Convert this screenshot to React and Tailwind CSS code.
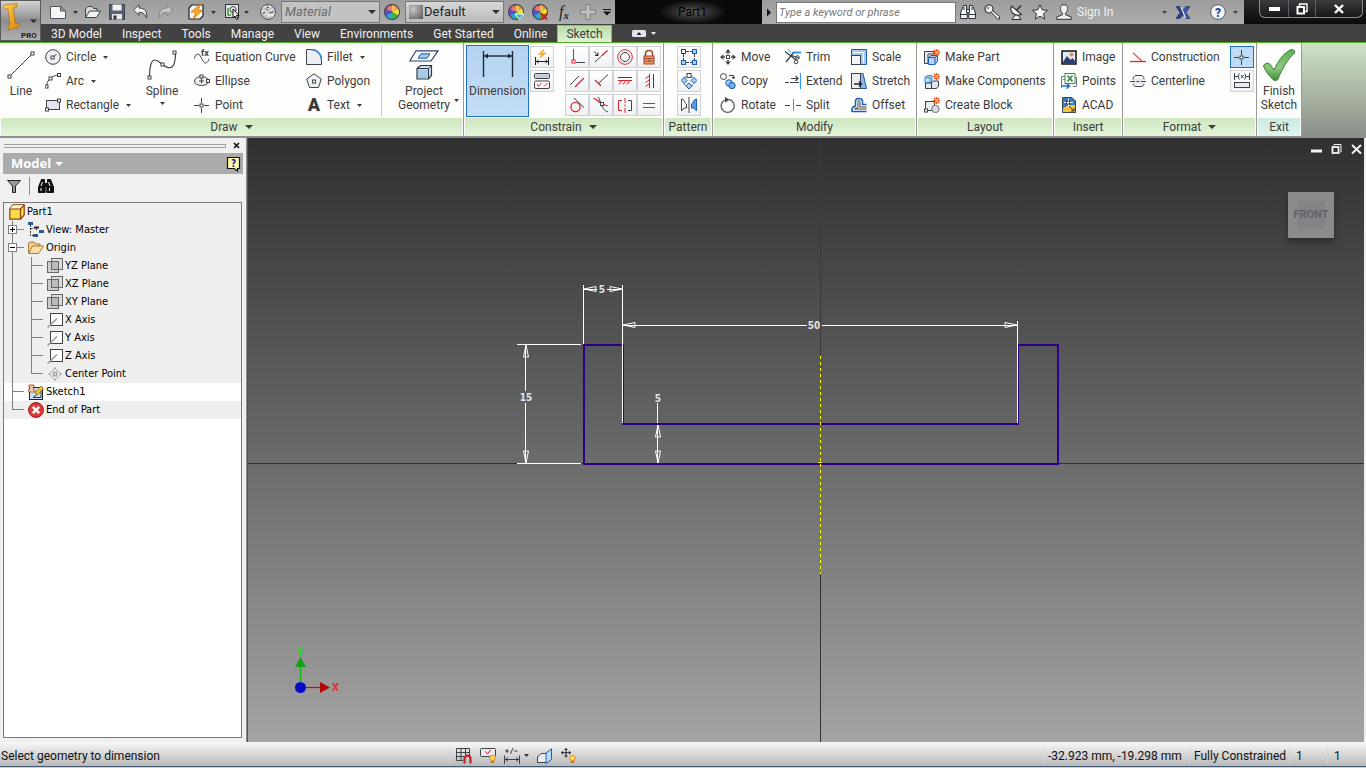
import clsx from "clsx";

const INK = "#3d4349";
const BLUE = "#1c5fb0";
const RED = "#d8262c";

function Svg({ w = 16, h = 16, className, children }) {
  return (
    <svg
      width={w}
      height={h}
      viewBox={`0 0 ${w} ${h}`}
      fill="none"
      stroke={INK}
      className={clsx("shrink-0", className)}
      aria-hidden="true"
    >
      {children}
    </svg>
  );
}

function Dot({ x, y, stroke = INK, fill = "#fff" }) {
  return <rect x={x - 1.5} y={y - 1.5} width="3" height="3" fill={fill} stroke={stroke} />;
}

function Caret({ small, className }) {
  return small ? (
    <svg width="5" height="3" viewBox="0 0 5 3" className={clsx("shrink-0", className)} aria-hidden="true">
      <path d="M0 0H5L2.5 3Z" fill="currentColor" />
    </svg>
  ) : (
    <svg width="8" height="4" viewBox="0 0 8 4" className={clsx("shrink-0", className)} aria-hidden="true">
      <path d="M0 0H8L4 4Z" fill="currentColor" />
    </svg>
  );
}

function ColorWheel() {
  return (
    <g stroke="none">
      <circle cx="8" cy="8" r="8" fill="#3b3f55" />
      <path d="M8 8V1A7 7 0 0 1 14 4.5Z" fill="#f7a11b" />
      <path d="M8 8L14 4.5A7 7 0 0 1 14 11.5Z" fill="#f4e23a" />
      <path d="M8 8L14 11.5A7 7 0 0 1 8 15Z" fill="#3cb64a" />
      <path d="M8 8V15A7 7 0 0 1 2 11.5Z" fill="#2aa6d8" />
      <path d="M8 8L2 11.5A7 7 0 0 1 2 4.5Z" fill="#5b4fc8" />
      <path d="M8 8L2 4.5A7 7 0 0 1 8 1Z" fill="#d8352f" />
      <ellipse cx="7" cy="4.5" rx="4" ry="2.5" fill="#fff" opacity="0.35" />
    </g>
  );
}

function Spark() {
  return (
    <>
      <path d="M12.5 0V7M9 3.5H16M10 1L15 6M15 1L10 6" stroke="#ee4a24" strokeWidth="1.2" />
      <circle cx="12.5" cy="3.5" r="1.3" fill="#ffd34d" stroke="none" />
    </>
  );
}

function Binoculars({ dark }) {
  return (
    <g fill={dark ? "#111" : "#f4f4f4"} stroke={dark ? "#111" : "#2b2f36"}>
      <path d="M3.5 1.5H6.5V5L7.2 8V14.5H0.5V9Z" />
      <path d="M9.5 1.5H12.5L15.5 9V14.5H8.8V8L9.5 5Z" />
      <path d="M6.5 5.5H9.5V8.5H6.5Z" />
      {dark ? (
        <path d="M4.5 4L3 8M3 10V13M10.5 4L12 8M11.5 10V13" stroke="#fff" />
      ) : (
        <path d="M1 10.500H7M9 10.500H15.500M4 3V6M12 3V6" />
      )}
    </g>
  );
}

const icons = {
  circle: (
    <>
      <circle cx="8" cy="8" r="7.3" fill="#eef0f2" />
      <path d="M8 8.5L11.5 5" />
      <Dot x={7.5} y={8.5} />
    </>
  ),
  arc: (
    <>
      <path d="M1.5 13.5C2 9 3 7.5 5.5 5.5C8 3 10.5 2.2 14.5 2" />
      <Dot x={1.5} y={13.5} />
      <Dot x={5.5} y={5.5} />
      <Dot x={14} y={2} />
    </>
  ),
  rectangle: (
    <>
      <rect x="1.5" y="3.5" width="13" height="9" fill="#e3e6ee" />
      <Dot x={2} y={12.5} />
      <Dot x={14} y={3.5} />
    </>
  ),
  equation: (
    <>
      <path d="M0 10C1.5 5 4.5 3 7 8C9 13 11 15 13 13.5C14.5 12 14.5 11 15 9.5" />
      <text x="7" y="7" fontSize="9" fontWeight="700" fill={INK} stroke="none">fx</text>
    </>
  ),
  ellipse: (
    <>
      <ellipse cx="7.5" cy="8" rx="7" ry="4.5" fill="#eef0f2" />
      <path d="M5 8H10M7.5 5.5V10.5" />
      <Dot x={7.5} y={3.5} />
      <Dot x={14} y={8} />
    </>
  ),
  point: (
    <>
      <path d="M0 8.5H5M10 8.5H15M7.5 1V6M7.5 11V16" />
      <Dot x={7.5} y={8.5} />
    </>
  ),
  fillet: (
    <>
      <path d="M0.5 15.5V0.5H5C11 0.5 15.5 5 15.5 11V15.5Z" fill="#eceef3" />
      <path d="M5 0.5C11 0.5 15.5 5 15.5 11" stroke="#2f86d8" strokeWidth="1.5" />
    </>
  ),
  polygon: (
    <>
      <path d="M8 0.8L15.3 6L12.5 14.5H3.5L0.7 6Z" fill="#eef0f2" />
      <Dot x={8} y={8.5} />
    </>
  ),
  coincident: (
    <>
      <path d="M4.5 0V11" stroke={RED} />
      <Dot x={4.5} y={12.5} stroke={RED} />
      <path d="M7 13.5H16" />
    </>
  ),
  collinear: (
    <>
      <path d="M2 13L8 7.5" />
      <path d="M8.5 7L14.5 1.5" stroke={RED} strokeWidth="1.3" />
      <path d="M1 2.5L5 6.5M5 3.5V6.5H2" stroke="#222" />
    </>
  ),
  concentric: (
    <>
      <circle cx="8" cy="8" r="7.3" stroke={RED} />
      <circle cx="8" cy="8" r="4.5" />
    </>
  ),
  lock: (
    <>
      <path d="M4.5 7V4.5C4.5 0.5 11.5 0.5 11.5 4.5V7" stroke="#a34524" strokeWidth="1.5" />
      <rect x="3" y="7" width="10" height="8" fill="#f0a070" stroke="#a34524" />
      <path d="M3 9.5H13M3 12H13M8 9V13" stroke="#a34524" />
    </>
  ),
  parallel: (
    <>
      <path d="M1 12L10 3" />
      <path d="M6 14L15 5" stroke={RED} strokeWidth="1.3" />
    </>
  ),
  perpendicular: (
    <>
      <path d="M2 7L8 13" stroke={RED} strokeWidth="1.3" />
      <path d="M5.5 10.5L15 1.5" />
    </>
  ),
  horizontal: (
    <>
      <path d="M1 4.5H15" />
      <path d="M1 7.5H15M4.5 8L2 11.5M8.5 8L6 11.5M12.5 8L10 11.5" stroke={RED} />
    </>
  ),
  vertical: (
    <>
      <path d="M12.5 1V15" />
      <path d="M8.5 1V15M8 3L4.5 5.5M8 7L4.5 9.5M8 11L4.5 13.5" stroke={RED} />
    </>
  ),
  tangent: (
    <>
      <circle cx="6.5" cy="10" r="4.6" stroke={RED} strokeWidth="1.3" />
      <path d="M5 1L15 10.5" />
    </>
  ),
  smooth: (
    <>
      <path d="M5 0C9 5 7 12 15 15" />
      <path d="M0.5 1.5C6 2 7 8 15 9" stroke={RED} strokeWidth="1.2" />
      <path d="M1 1L8 7" stroke={RED} />
      <Dot x={9} y={7} stroke={INK} />
    </>
  ),
  symmetric: (
    <>
      <path d="M5 3.5H1.5V13.5H5" stroke={RED} />
      <path d="M11 3.5H14.5V13.5H11" />
      <path d="M8 1V6M8 7.5V9.5M8 11V16" stroke={RED} />
    </>
  ),
  equal: <path d="M2 6.5H14M2 10.5H14" stroke={RED} strokeWidth="1.2" />,
  autoDim: (
    <>
      <path d="M10 0L4.5 5.5H8L6 9L12 4H8.5Z" fill="#f9b824" stroke="#e08a10" strokeWidth="0.5" />
      <path d="M1.5 8V16M14.5 8V16M2 12.5H14M4.5 11L2.5 12.5L4.5 14M11.5 11L13.5 12.5L11.5 14" stroke="#222" />
    </>
  ),
  showConstraints: (
    <>
      <rect x="0.5" y="0.5" width="15" height="5" rx="1" fill="#c9ced8" />
      <rect x="0.5" y="8" width="15" height="7.5" rx="1.5" fill="#fff" />
      <path d="M3 11L4.5 13.5L7.5 10M10 13.5L13.5 10" stroke={RED} />
    </>
  ),
  patRect: (
    <>
      <path d="M5 2.5H11M2.5 5V11M13.5 5V11M5 13.5H11" strokeDasharray="3 1" />
      <rect x="0.5" y="0.5" width="4" height="4" fill="#fff" />
      <rect x="11.5" y="0.5" width="4" height="4" fill="#a9cdf5" stroke={BLUE} />
      <rect x="0.5" y="11.5" width="4" height="4" fill="#a9cdf5" stroke={BLUE} />
      <rect x="11.5" y="11.5" width="4" height="4" fill="#a9cdf5" stroke={BLUE} />
    </>
  ),
  patCirc: (
    <>
      <circle cx="8" cy="8" r="5.5" strokeDasharray="2 2" />
      <rect x="6" y="0.5" width="4" height="4" fill="#fff" />
      <path
        d="M3 4.500L6 7.500L3 10.500L0 7.500ZM13 4.500L16 7.500L13 10.500L10 7.500ZM8 10L11 13L8 16L5 13Z"
        fill="#a9cdf5"
        stroke={BLUE}
      />
    </>
  ),
  mirror: (
    <>
      <path d="M0.5 14V2C4 2 3 6 5.5 7V11H3L0.5 14Z" fill="#fff" />
      <path d="M15.5 14V2C12 2 13 6 10.5 7V11H13L15.5 14Z" fill="#5d9be0" stroke={BLUE} />
      <path d="M8 0V16" />
    </>
  ),
  move: (
    <g fill={INK} stroke="none">
      <path d="M8 0L10.8 3.5H5.2ZM8 16L5.2 12.5H10.8ZM0 8L3.5 5.2V10.8ZM16 8L12.5 10.8V5.2Z" />
      <path d="M7.2 3.5H8.8V5H7.2ZM7.2 11H8.8V12.5H7.2ZM3.5 7.2H5V8.8H3.5ZM11 7.2H12.5V8.8H11Z" />
      <rect x="6.5" y="6.5" width="3" height="3" fill="#fff" stroke={INK} />
    </g>
  ),
  copy: (
    <>
      <circle cx="3.5" cy="3.5" r="3" fill="#fff" />
      <path d="M9 2.5H13.5V5M12 4L13.5 6L15 4" />
      <circle cx="9" cy="10" r="3.2" fill="#a9cdf5" stroke={BLUE} />
      <circle cx="12" cy="12.5" r="3.2" fill="#7da8e6" stroke={BLUE} />
    </>
  ),
  rotate: (
    <>
      <path d="M9 2.5A6.5 6.5 0 1 1 4.5 3.2" strokeWidth="1.5" stroke="#6a6e74" />
      <path d="M5 0L9.5 2.7L5 5.5Z" fill={INK} stroke="none" />
    </>
  ),
  trim: (
    <>
      <path d="M1 13L9 3M0 2.5L11 11M5 6L14 9" strokeWidth="1.3" />
      <path d="M9 3.5H16" stroke="#2b9af0" strokeWidth="2" />
      <path d="M3 0L6 4" stroke="#2b9af0" />
      <circle cx="12.5" cy="8.5" r="1.8" />
      <circle cx="11" cy="13" r="1.8" />
    </>
  ),
  extend: (
    <>
      <path d="M0 9.5H4M5 9.5H14M6 5.5H13M10.5 3L13 5.5L10.5 8" strokeWidth="1.2" />
      <path d="M15.5 0V16" stroke="#2b9af0" />
    </>
  ),
  split: (
    <>
      <path d="M0 8.500H5M11 8.500H16" />
      <path d="M8.5 2V14" stroke="#2b9af0" />
    </>
  ),
  scale: (
    <>
      <path d="M0.5 0.5H15.5V15.5H0.5Z" fill="#a9c8f0" stroke={BLUE} />
      <rect x="0.5" y="6.5" width="9" height="9" fill="#f2f4f8" />
      <path d="M2 3.5H12.5V14" stroke="#fff" />
    </>
  ),
  stretch: (
    <>
      <path d="M9.5 0.5H12L15.5 15.5H9.5Z" fill="#8fb8ef" stroke={BLUE} />
      <rect x="0.5" y="0.5" width="9" height="15" fill="#eceef3" />
      <path d="M3 11H10M8 8.5L10.5 11L8 13.5" strokeWidth="1.4" stroke="#222" />
    </>
  ),
  offset: (
    <>
      <path
        d="M15.500 14.500H1C0.500 11 1.500 9.500 4.500 9V4C4.500 0.500 11.500 0.500 11.500 4V7.500H15.500"
        stroke={BLUE}
        strokeWidth="1.500"
      />
      <path d="M15.500 12H3.500C3.500 11 5 11 7 11V4.500C7 3 9 3 9 4.500V10H15.500" />
    </>
  ),
  makePart: (
    <>
      <path d="M0.5 14.5V2.5H10V5H4V14.5Z" fill="#e3e6ee" />
      <path d="M4.5 8.5L7 6.5H13.5V12L11 15.5H4.5ZM4.5 8.5H11V15.5M11 8.5L13.5 6.5" fill="#bcd4f4" stroke={BLUE} />
      <Spark />
    </>
  ),
  makeComponents: (
    <>
      <path d="M1 4.5L3 2.5H8V8.5L6 10H1ZM1 4.5H6V10" fill="#bcdcf8" stroke="#2f86d8" />
      <path d="M1.5 10H7.5V15.5H1.5ZM7.5 9.5L9.5 8H14.5V13L12.5 15.5H7.5Z" fill="#e3e6ee" />
      <Spark />
    </>
  ),
  createBlock: (
    <>
      <rect x="1.5" y="4.5" width="9" height="9" fill="#e9ebf0" />
      <Dot x={2} y={13.5} />
      <circle cx="11.5" cy="12" r="3.7" fill="#d9dce2" stroke="#777" />
      <Spark />
    </>
  ),
  image: (
    <>
      <rect x="1" y="2" width="14" height="13" fill="#dfe9f8" stroke="#111" strokeWidth="1.5" />
      <circle cx="10.5" cy="5.5" r="2" fill="#f08a3c" stroke="none" />
      <path d="M2 13L6 7L9.5 11L11.5 9L14 12V14.3H2Z" fill="#2c3e70" stroke="none" />
    </>
  ),
  points: (
    <>
      <path d="M0.500 3.500H4M0.500 3.500V15M2 6.500H4M12 13.500H15.500V4.500H13" stroke="#777" />
      <rect x="4" y="0.5" width="10" height="10" fill="#fff" stroke="#2f9148" />
      <path d="M6.5 2.5L11.5 8.5M11.5 2.5L6.5 8.5" stroke="#2f9148" strokeWidth="1.8" />
      <path d="M1 13H8M5.5 10.5L8.5 13L5.5 15.5" stroke="#2474c8" strokeWidth="1.6" />
    </>
  ),
  acad: (
    <>
      <path d="M1.5 0.5H11L14.5 4V15.5H1.5Z" fill="#2f7cc4" stroke="#3a4654" />
      <path d="M8 8H14V15H2V11Z" fill="#f5c63c" stroke="none" />
      <path d="M3 5.5H12M7.5 1.5V10" stroke="#fff" />
      <Dot x={7} y={5.5} />
      <path d="M8 9L13 14M13 11V14H10" stroke="#333" />
    </>
  ),
  construction: (
    <>
      <path d="M0 12.5H16" stroke={RED} strokeWidth="1.3" />
      <path d="M3 4L12 12" stroke="#e0575a" strokeWidth="1.300" />
    </>
  ),
  centerline: (
    <>
      <path d="M3 6.500C3 4 5 2.500 6 2.500H11C13 2.500 14 4 14 6.500M3 10.500C3 12.500 5 13.500 6 13.500H11C13 13.500 14 12.500 14 10.500" />
      <path d="M4 5.5H13V11.5H4Z" fill="#e6e8ec" stroke="none" />
      <path d="M0 8.500H5M6.5 8.500H9.5M11 8.500H16" strokeWidth="1.2" />
    </>
  ),
  driven: (
    <>
      <path d="M0.5 0V7M15.5 0V7M0.5 3.5H4M12 3.5H15.5M5.5 0.5C4 2 4 5 5.5 6.5M10.5 0.5C12 2 12 5 10.5 6.5M7 2L9.5 5M9.5 2L7 5" />
      <rect x="0.5" y="9.5" width="15" height="5" fill="#e9ebf0" />
    </>
  ),
  newFile: (
    <path d="M0.5 2.5H10.5L15.5 7V14.5H0.5ZM10.5 2.5V7H15.5" fill="#f4f5f7" stroke="#50555c" />
  ),
  open: (
    <>
      <path d="M0.5 13.5V5L3 2.5H7L8.5 4.5H12V7" fill="#d8dade" />
      <path d="M0.5 13.5L4.5 7H15.5L11.5 13.5Z" fill="#f0f1f3" />
    </>
  ),
  save: (
    <>
      <path d="M0.5 0.5H15.5V15.5H0.5Z" fill="#566274" />
      <rect x="3.5" y="0.5" width="9" height="6" fill="#f4f4f4" stroke="none" />
      <rect x="3" y="10" width="10" height="5.5" fill="#e4e6ea" stroke="none" />
      <rect x="4.5" y="11.5" width="3" height="4" fill="#333" stroke="none" />
    </>
  ),
  undo: (
    <path d="M0.5 6L6 0.8V4C12 4 14.5 8 13.5 14C12.5 10 10 8.3 6 8.3V11.3Z" fill="#f6f6f6" stroke="#3c4046" />
  ),
  redo: (
    <path d="M15.5 6L10 0.8V4C4 4 1.5 8 2.5 14C3.5 10 6 8.3 10 8.3V11.3Z" fill="#c4c6c8" stroke="#808386" />
  ),
  update: (
    <>
      <path d="M1 4L4 1H15V12L12 15H1Z" fill="#f4f4f4" stroke="#222" strokeWidth="1.2" />
      <path d="M13 0L3 8H8L5 15L14 6.5H9.5Z" fill="#ffb01f" stroke="#e27c0c" />
    </>
  ),
  select: (
    <>
      <rect x="1.5" y="0.5" width="13" height="13" fill="#e4e6e8" stroke="#333" />
      <path d="M4 4V11H7" stroke="#3a9c3a" strokeWidth="1.5" />
      <circle cx="9" cy="5.5" r="3" />
      <path d="M9 5V14L11 12L12.5 15.5L14 15L12.5 11.5H15Z" fill="#fff" stroke="#111" />
    </>
  ),
  material: (
    <>
      <circle cx="8" cy="8" r="7.5" fill="#b9bcbf" stroke="#55585c" />
      <path
        d="M3 4L6 2M5 7L9 4M4 11L8 8M8 13L12 10M10 7L13 5M2 8L4 6M9 2L11 3M7 11L10 11M12 13L14 9"
        stroke="#f4f4f4"
        strokeWidth="1.4"
      />
      <path d="M6 5L8 6M10 9L13 8M3 9L5 9M7 3L9 4" stroke="#4c4f54" />
    </>
  ),
  wheel: <ColorWheel />,
  wheelApply: (
    <>
      <ColorWheel />
      <path d="M7 10H16L11.5 15.5Z" fill="#3bb0e4" stroke="#fff" />
    </>
  ),
  wheelClear: (
    <>
      <ColorWheel />
      <path d="M9 9.5L15 15.5M15 9.5L9 15.5" stroke="#d42020" strokeWidth="2.2" />
    </>
  ),
  plus: <path d="M6 0.5H10V6H15.5V10H10V15.5H6V10H0.5V6H6Z" fill="#c0c0c0" stroke="#808080" />,
  binoculars: <Binoculars />,
  find: <Binoculars dark />,
  key: (
    <>
      <circle cx="5" cy="5" r="4" fill="#f0f0f0" stroke="#333" strokeWidth="1.2" />
      <circle cx="4" cy="4" r="1.2" fill="#888" stroke="none" />
      <path d="M7.5 8.5L13.5 15H15.5V12.5L9 7" fill="#f0f0f0" stroke="#333" />
    </>
  ),
  satellite: (
    <>
      <path d="M8 10L4 15.5H13L10 11" fill="#e8e8e8" stroke="#333" />
      <path d="M3.500 2C1 7.500 6 13 13.500 10.500Z" fill="#f4f4f4" stroke="#333" strokeWidth="1.2" />
      <path d="M8.500 6.500L13 1.500" stroke="#333" strokeWidth="1.500" />
    </>
  ),
  star: (
    <path
      d="M8 0.8L10.2 5.8L15.5 6.3L11.5 9.8L12.7 15L8 12.2L3.3 15L4.5 9.8L0.5 6.3L5.8 5.8Z"
      fill="#f4f4f4"
      stroke="#2b2f36"
    />
  ),
  user: (
    <path
      d="M8 0.7C4.8 0.7 4.3 3 4.6 5.5C4.8 7.3 5.6 8.5 6.5 9.3V10.8L0.7 13V15.3H15.3V13L9.5 10.8V9.3C10.4 8.5 11.2 7.3 11.4 5.5C11.7 3 11.2 0.7 8 0.7Z"
      fill="#eef0f2"
      stroke="#333"
    />
  ),
  exchange: (
    <>
      <path d="M1 2.5H5L8 6V11L5 14.5H1L5 8.5Z" fill="#2d3f86" stroke="#1f2c60" strokeWidth="0.6" />
      <path d="M15 2.5H11L8 6V11L11 14.5H15L11 8.5Z" fill="#3d57ae" stroke="#1f2c60" strokeWidth="0.6" />
      <path d="M6 3L10.5 14" stroke="#dfe4f4" strokeWidth="1.3" />
    </>
  ),
  help: (
    <>
      <circle cx="8" cy="8" r="7.3" fill="#f8f9fb" stroke="#555b66" />
      <text x="8" y="12.500" textAnchor="middle" fontSize="12" fontWeight="900" fill="#1f4fa3" stroke="none">?</text>
    </>
  ),
  filter: (
    <path d="M1.5 2.5H14.5L9.5 8V14.5H6.5V8Z" fill="#9a9a9a" stroke="#222" />
  ),
  part: (
    <>
      <path d="M0.8 5L4 0.8H15.2V11L11.5 15.2H0.8Z" fill="#f8dc4a" stroke="#8a3f10" strokeWidth="1.2" />
      <path d="M4 1.2H15L11.5 5H1Z" fill="#fff8d0" stroke="none" />
      <path d="M0.8 5H11.5V15.2M11.5 5L15.2 0.8" stroke="#8a3f10" strokeWidth="1.2" />
    </>
  ),
  view: (
    <>
      <path d="M2.5 3V13.5H5M2.5 6.500H6M8.500 6V9" stroke="#333" strokeDasharray="2 1" />
      <path d="M0 1.5H5M5 13.5H10M11 9.5H16" stroke="#2a5a88" strokeWidth="3" />
      <path d="M6 5.5H11" stroke="#222" strokeWidth="2" />
    </>
  ),
  folder: (
    <>
      <path d="M0.5 13V3.5L2 2H6L7.5 4H12V6" fill="#f2cf8a" stroke="#a67c3a" />
      <path d="M0.5 13.5L4.5 6H15.5L10.5 13.5Z" fill="#f8dfa6" stroke="#a67c3a" />
    </>
  ),
  plane: (
    <>
      <rect x="0.5" y="3.5" width="11" height="11" fill="#ccc" stroke="#666" />
      <rect x="4.500" y="0.5" width="11" height="11" fill="#ddd" stroke="#666" />
      <rect x="4.500" y="3.5" width="7" height="8" fill="#bbb" stroke="#666" />
    </>
  ),
  axis: (
    <>
      <rect x="3.500" y="1.5" width="12" height="12" fill="#fff" stroke="#444" />
      <path d="M0.5 15.5L10 6.5" stroke="#999" strokeWidth="1.5" />
    </>
  ),
  center: (
    <>
      <path d="M8 2L14 8L8 14L2 8Z" fill="#fafafa" stroke="#aaa" />
      <rect x="6" y="6" width="4" height="4" fill="#ccc" stroke="#999" />
      <path d="M8 1V4M8 12V15M1 8H4M12 8H15" stroke="#aaa" />
    </>
  ),
  sketch: (
    <>
      <rect x="1.5" y="3.5" width="13" height="12" fill="#cfe2f4" stroke="#223" />
      <path d="M5 13.5H13V7M5 13.5L12 8" stroke="#334" />
      <path d="M7 9L13 2L15.5 4L9.5 11Z" fill="#f6c22c" stroke="#8a6210" strokeWidth="0.7" />
      <path d="M1 1H6V3H5L6 6H7V8H0V6H1L2 3H1Z" fill="#f2c9a0" stroke="#a34524" strokeWidth="0.8" />
    </>
  ),
  end: (
    <>
      <circle cx="8" cy="8" r="7.4" fill="#df3c3c" stroke="#8d1818" />
      <path d="M4.8 4.8L11.2 11.2M11.2 4.8L4.8 11.2" stroke="#fff" strokeWidth="2.4" />
    </>
  ),
  snapGrid: (
    <>
      <path d="M0.5 0.5H13.5V8M0.5 0.5V12.5H7M5 0.5V12.5M9.5 0.5V7M0.5 4.5H13.5M0.5 8.5H8" />
      <path d="M8.5 15.5V11C8.5 6.5 14.5 6.5 14.5 11V15.5" stroke="#c3202a" strokeWidth="2.2" />
    </>
  ),
  constraintBulb: (
    <>
      <rect x="0.5" y="0.5" width="15" height="8" rx="1" fill="#e6e8ec" />
      <path d="M5.5 3.5L7.5 6L10.5 2" stroke="#c3202a" />
      <circle cx="12.5" cy="10" r="2.8" fill="#ffd75a" stroke="#ee8f1a" />
      <path d="M11 14H14" stroke="#c96a10" strokeWidth="2" />
    </>
  ),
  tolerance: (
    <path d="M0.5 7.5V16M15.5 7.5V16M1 11.5H15M4 9.5L1.5 11.5L4 13.5M12 9.5L14.5 11.5L12 13.5M1 3H5M3 1V5M9 0L6.5 6M10 3H13.5" />
  ),
  slice: (
    <>
      <path d="M0.5 14.5V9L4 5.5H10V14.5Z" fill="#e9ebef" />
      <path d="M9 15.5V5L14.5 0.8V11.5Z" fill="#b7dbf6" stroke={BLUE} />
    </>
  ),
  dofBulb: (
    <>
      <path d="M5 0V9.5M0 4.7H10M3.5 1.5H6.5M3.5 8H6.5M1.5 3.2V6.2M8.5 3.2V6.2" stroke="#222" />
      <circle cx="11.5" cy="10" r="2.8" fill="#ffd75a" stroke="#ee8f1a" />
      <path d="M10 14H13" stroke="#c96a10" strokeWidth="2" />
    </>
  ),
};

function Icon({ name, className }) {
  return <Svg className={className}>{icons[name]}</Svg>;
}

function ToolButton({ icon, label, caret }) {
  return (
    <button type="button" className="flex h-6 items-center gap-[5px] whitespace-nowrap text-left">
      {icon === "letter" ? (
        <span aria-hidden="true" className="w-4 text-center text-[18px] leading-6 font-black text-[#3a3a3a]">
          A
        </span>
      ) : (
        <Icon name={icon} />
      )}
      {label}
      {caret && <Caret small className="ml-[2px]" />}
    </button>
  );
}

function ToolColumn({ tools, className }) {
  return (
    <div className={clsx("flex shrink-0 flex-col", className)}>
      {tools.map((tool) => (
        <ToolButton key={tool.label} {...tool} />
      ))}
    </div>
  );
}

function BigButton({ icon, lines, className, caret }) {
  return (
    <button
      type="button"
      className={clsx("flex h-[72px] shrink-0 flex-col items-center leading-[14px]", className)}
    >
      <span className="flex h-[39px] items-center justify-center">{icon}</span>
      {lines.map((line) => (
        <span key={line}>{line}</span>
      ))}
      {caret && <Caret small className="mt-1" />}
    </button>
  );
}

function SmallButton({ icon, active }) {
  return (
    <button
      type="button"
      aria-label={icon}
      aria-pressed={active}
      className={clsx(
        "flex h-[22px] w-6 items-center justify-center border",
        active ? "border-[#1c6fc4] bg-[#c0dbf5]" : "border-[#cfd2d6] bg-gradient-to-b from-white to-[#f0f1f3]"
      )}
    >
      <Icon name={icon} />
    </button>
  );
}

function Panel({ title, caret, className, exit, children }) {
  return (
    <section className={clsx("flex shrink-0 flex-col border-r border-[#9a9a9a] bg-[#fdfefc]", className)}>
      <div className="flex flex-1 pt-[2px]">{children}</div>
      <div
        className={clsx(
          "mx-px flex h-[18px] items-center justify-center gap-[7px] bg-gradient-to-b",
          exit ? "from-[#cdeae2] to-[#dff5ef]" : "from-[#cfe6c0] to-[#e4f5da]"
        )}
      >
        {title}
        {caret && <Caret />}
      </div>
    </section>
  );
}

const lineIcon = (
  <Svg w={30} h={30}>
    <path d="M3 27L27 3" />
    <Dot x={3.5} y={26.5} />
    <Dot x={26.5} y={3.5} />
  </Svg>
);

const splineIcon = (
  <Svg w={30} h={32}>
    <path d="M2.5 29C2.5 18 4 11 8 11C11 11 13 14 15.5 15.5C20 19 28.5 24 28.5 4" strokeWidth="1.2" />
    <Dot x={2.5} y={28.5} />
    <Dot x={15.5} y={15.5} />
    <Dot x={27.5} y={3.5} />
  </Svg>
);

const projectIcon = (
  <Svg w={30} h={30}>
    <path d="M0.8 11L7 0.8H29L22 11Z" fill="#fff" stroke="#274272" strokeWidth="1.2" />
    <path d="M9 8.2L12 3.8H21L18 8.2Z" fill="#a9c8f0" stroke={BLUE} />
    <path d="M8 18.5L11.5 15.5H22.5V25.5L19.5 29H8Z" fill="#cfdff0" stroke="#2c3844" strokeWidth="1.2" />
    <path d="M8 18.5H19.5V29M19.5 18.5L22.5 15.5" stroke="#2c3844" />
    <rect x="9" y="20" width="9.5" height="8" fill="#a8c8ec" stroke="none" />
  </Svg>
);

const dimensionIcon = (
  <Svg w={32} h={28}>
    <path d="M1.5 0V26M30.5 0V26" stroke="#1c2b3c" strokeWidth="1.4" />
    <path d="M2 5H30" stroke="#1c2b3c" strokeWidth="1.4" />
    <path d="M2 5L6 2.5V7.5ZM30 5L26 2.5V7.5Z" fill="#1c2b3c" stroke="none" />
  </Svg>
);

const finishIcon = (
  <Svg w={34} h={34}>
    <defs>
      <linearGradient id="tick" x1="0" y1="0" x2="0" y2="1">
        <stop offset="0" stopColor="#5fae57" />
        <stop offset="0.6" stopColor="#8cc97c" />
        <stop offset="1" stopColor="#3f8a3c" />
      </linearGradient>
    </defs>
    <path
      d="M1.5 18C3 14.500 7 14.500 8.500 17L12 22C16 13 21 6 28 2C31 1 33.500 2 32.500 5C25 12 20 21 16 31C15 33 12 33 10.5 31C7 28 3.5 23 1.5 18Z"
      fill="url(#tick)"
      stroke="#3b7a3a"
    />
  </Svg>
);

const constraintRows = [
  ["coincident", "collinear", "concentric", "lock"],
  ["parallel", "perpendicular", "horizontal", "vertical"],
  ["tangent", "smooth", "symmetric", "equal"],
];

function Ribbon() {
  return (
    <div className="flex h-[95px] overflow-hidden border-b-2 border-[#8f8f8f] bg-gradient-to-b from-[#cfe3c4] to-[#8b8f89] text-xs text-[#3c3c3c]">
      <Panel title="Draw" caret className="w-[464px]">
        <BigButton icon={lineIcon} lines={["Line"]} className="w-[45px] pr-[3px]" />
        <ToolColumn
          className="w-[94px]"
          tools={[
            { icon: "circle", label: "Circle", caret: true },
            { icon: "arc", label: "Arc", caret: true },
            { icon: "rectangle", label: "Rectangle", caret: true },
          ]}
        />
        <BigButton icon={splineIcon} lines={["Spline"]} caret className="w-[46px]" />
        <ToolColumn
          className="ml-[9px] w-28"
          tools={[
            { icon: "equation", label: "Equation Curve" },
            { icon: "ellipse", label: "Ellipse" },
            { icon: "point", label: "Point" },
          ]}
        />
        <ToolColumn
          className="w-[75px]"
          tools={[
            { icon: "fillet", label: "Fillet", caret: true },
            { icon: "polygon", label: "Polygon" },
            { icon: "letter", label: "Text", caret: true },
          ]}
        />
        <div className="h-[72px] w-px bg-[#c9ccc8]" />
        <div className="flex pl-3">
          <BigButton icon={projectIcon} lines={["Project", "Geometry"]} className="w-[60px]" />
          <Caret small className="mt-[54px]" />
        </div>
      </Panel>

      <Panel title="Constrain" caret className="w-[200px]">
        <BigButton
          icon={dimensionIcon}
          lines={["Dimension"]}
          className="ml-[2px] w-[63px] bg-gradient-to-b from-[#b4d2f0] to-[#c4def6] ring-1 ring-[#1c6fc4] ring-inset"
        />
        <div className="ml-px flex flex-col gap-[2px] pt-px">
          <SmallButton icon="autoDim" />
          <SmallButton icon="showConstraints" />
        </div>
        <div className="ml-[11px] flex flex-col gap-[2px] pt-px">
          {constraintRows.map((row) => (
            <div key={row[0]} className="flex">
              {row.map((name) => (
                <SmallButton key={name} icon={name} />
              ))}
            </div>
          ))}
        </div>
      </Panel>

      <Panel title="Pattern" className="w-[49px]">
        <div className="ml-[13px] flex flex-col gap-[2px] pt-px">
          <SmallButton icon="patRect" />
          <SmallButton icon="patCirc" />
          <SmallButton icon="mirror" />
        </div>
      </Panel>

      <Panel title="Modify" className="w-[204px]">
        <ToolColumn
          className="ml-[7px] w-[65px]"
          tools={[
            { icon: "move", label: "Move" },
            { icon: "copy", label: "Copy" },
            { icon: "rotate", label: "Rotate" },
          ]}
        />
        <ToolColumn
          className="w-[66px]"
          tools={[
            { icon: "trim", label: "Trim" },
            { icon: "extend", label: "Extend" },
            { icon: "split", label: "Split" },
          ]}
        />
        <ToolColumn
          tools={[
            { icon: "scale", label: "Scale" },
            { icon: "stretch", label: "Stretch" },
            { icon: "offset", label: "Offset" },
          ]}
        />
      </Panel>

      <Panel title="Layout" className="w-[137px]">
        <ToolColumn
          className="ml-[7px]"
          tools={[
            { icon: "makePart", label: "Make Part" },
            { icon: "makeComponents", label: "Make Components" },
            { icon: "createBlock", label: "Create Block" },
          ]}
        />
      </Panel>

      <Panel title="Insert" className="w-[69px]">
        <ToolColumn
          className="ml-[7px]"
          tools={[
            { icon: "image", label: "Image" },
            { icon: "points", label: "Points" },
            { icon: "acad", label: "ACAD" },
          ]}
        />
      </Panel>

      <Panel title="Format" caret className="w-[134px]">
        <ToolColumn
          className="ml-[7px] w-[100px]"
          tools={[
            { icon: "construction", label: "Construction" },
            { icon: "centerline", label: "Centerline" },
          ]}
        />
        <div className="flex flex-col gap-[2px] pt-px">
          <SmallButton icon="point" active />
          <SmallButton icon="driven" />
        </div>
      </Panel>

      <Panel title="Exit" exit className="w-[45px]">
        <BigButton icon={finishIcon} lines={["Finish", "Sketch"]} className="w-full" />
      </Panel>
    </div>
  );
}

function BarButton({ icon, className }) {
  return (
    <button
      type="button"
      aria-label={icon}
      className={clsx("flex h-6 w-6 shrink-0 items-center justify-center", className)}
    >
      <Icon name={icon} />
    </button>
  );
}

function QuickAccess() {
  return (
    <div className="flex h-6 shrink-0 items-center bg-gradient-to-b from-[#9d9d9d] to-[#adadad] pl-[5px] pr-1 text-[#333]">
      <BarButton icon="newFile" />
      <Caret small className="mx-[3px]" />
      <BarButton icon="open" />
      <BarButton icon="save" />
      <BarButton icon="undo" />
      <BarButton icon="redo" />
      <BarButton icon="update" className="ml-[7px]" />
      <Caret small className="mx-[3px]" />
      <BarButton icon="select" className="ml-px" />
      <Caret small className="mr-[7px]" />
      <BarButton icon="material" />
      <div className="relative ml-px flex items-center">
        <select
          aria-label="Material"
          className="h-[22px] w-[99px] appearance-none border border-[#777] bg-[#c2c2c2] px-[3px] text-[13px] text-[#6d6d6d] italic"
        >
          <option>Material</option>
        </select>
        <Caret className="pointer-events-none absolute right-1" />
      </div>
      <BarButton icon="wheel" className="mr-px" />
      <div className="relative flex items-center">
        <select
          aria-label="Appearance"
          className="h-[22px] w-[99px] appearance-none border border-[#777] bg-gradient-to-b from-[#d6d6d6] to-[#bcbcbc] pl-[18px] text-[13px] text-[#222]"
        >
          <option>Default</option>
        </select>
        <span className="pointer-events-none absolute left-1 h-[14px] w-[14px] bg-radial-[at_30%_30%] from-[#c8c8c8] to-[#555]" />
        <Caret className="pointer-events-none absolute right-1" />
      </div>
      <BarButton icon="wheelApply" />
      <BarButton icon="wheelClear" />
      <button
        type="button"
        aria-label="Parameters"
        className="flex h-6 w-6 items-center justify-center font-['Liberation_Serif',serif] text-[16px] leading-6 text-[#222] italic"
      >
        f<sub className="text-[11px] leading-3 font-bold">x</sub>
      </button>
      <BarButton icon="plus" />
      <Svg w={8} h={7} className="ml-[3px]">
        <path d="M0 0.5H8" stroke="#111" />
        <path d="M0 2.5H8L4 6.5Z" fill="#111" stroke="none" />
      </Svg>
    </div>
  );
}

function InfoCenter() {
  return (
    <div className="flex h-6 shrink-0 items-center bg-gradient-to-b from-[#9d9d9d] to-[#adadad] text-[#444]">
      <Svg w={14} h={9}>
        <path d="M5 0.5V8.5L9 4.5Z" fill="#111" stroke="none" />
      </Svg>
      <input
        aria-label="Search"
        placeholder="Type a keyword or phrase"
        className="h-[21px] w-[180px] border border-[#777] bg-white px-[2px] text-[11px] italic placeholder:text-[#777]"
      />
      <BarButton icon="binoculars" />
      <BarButton icon="key" />
      <BarButton icon="satellite" />
      <BarButton icon="star" />
      <button type="button" className="flex w-[106px] items-center gap-[5px] pl-1 text-xs text-[#f2f2f2]">
        <Icon name="user" />
        Sign In
      </button>
      <Caret small className="mx-1" />
      <BarButton icon="exchange" className="mr-[11px]" />
      <BarButton icon="help" />
      <Caret small className="mr-[6px] ml-[3px]" />
    </div>
  );
}

function WindowButtons() {
  return (
    <div className="flex h-6 w-[122px] shrink-0 items-start justify-end bg-gradient-to-b from-[#26282b] to-[#0b0b0c] pr-[3px]">
      <div className="flex h-[18px] rounded-b-md border border-t-0 border-[#8a8d90] bg-gradient-to-b from-[#3a3d40] to-[#17181a]">
        <button
          type="button"
          aria-label="Minimize"
          className="flex w-[29px] items-center justify-center border-r border-[#5c5f62]"
        >
          <span className="h-1 w-[11px] bg-white" />
        </button>
        <button
          type="button"
          aria-label="Restore"
          className="flex w-[27px] items-center justify-center border-r border-[#5c5f62]"
        >
          <Svg w={12} h={12}>
            <path d="M3.5 3V1H11V8.5H9" stroke="#fff" strokeWidth="1.4" />
            <rect x="1.5" y="4" width="6.5" height="6.5" stroke="#fff" strokeWidth="2" />
          </Svg>
        </button>
        <button type="button" aria-label="Close" className="flex w-[46px] items-center justify-center">
          <Svg w={12} h={10}>
            <path d="M2 1L10 9M10 1L2 9" stroke="#fff" strokeWidth="2.4" />
          </Svg>
        </button>
      </div>
    </div>
  );
}

const tabs = ["3D Model", "Inspect", "Tools", "Manage", "View", "Environments", "Get Started", "Online", "Sketch"];

function AppButton() {
  return (
    <button
      type="button"
      aria-label="Application menu"
      className="flex h-[41px] w-[41px] shrink-0 border border-[#5a5a5a] bg-gradient-to-b from-[#d4d4d4] via-[#8e8e8e] to-[#b0b0b0]"
    >
      <Svg w={39} h={39}>
        <defs>
          <linearGradient id="logo" x1="0" y1="0" x2="1" y2="1">
            <stop offset="0" stopColor="#ffd257" />
            <stop offset="1" stopColor="#d98508" />
          </linearGradient>
        </defs>
        <path
          d="M3 4L16 2.5V6L12.5 7L14 22L18 22.5V26L7.500 29V25L9 23.5L7 8L3 7.5Z"
          fill="url(#logo)"
          stroke="#a8660a"
          strokeWidth="0.6"
        />
        <path d="M29 18.5H36L32.5 22Z" fill="#2b2b2b" stroke="none" />
        <text x="20" y="37" fontSize="8" fontWeight="700" fill="#1b1b1b" stroke="none">PRO</text>
      </Svg>
    </button>
  );
}

function Header() {
  return (
    <header className="flex shrink-0 flex-col bg-[#424242]">
      <div className="flex h-[42px]">
        <AppButton />
        <div className="flex min-w-0 flex-1 flex-col">
          <div className="flex h-6">
            <QuickAccess />
            <div className="flex flex-1 items-center justify-center bg-[#0a0a0a] pl-2 text-xs text-black">
              <span className="bg-radial from-[#5a5a5a] to-[#0a0a0a] to-70% px-5 py-1">Part1</span>
            </div>
            <InfoCenter />
            <WindowButtons />
          </div>
          <nav className="flex flex-1 items-end text-xs text-[#f0f0f0]">
            {tabs.map((tab) => (
              <button
                key={tab}
                type="button"
                className={clsx(
                  "flex h-[17px] items-center border-x border-t pb-px",
                  tab === "Sketch"
                    ? "border-[#62e31c] bg-gradient-to-b from-[#b9dca6] to-[#e0f2d6] px-2 text-[#3c3c3c]"
                    : "border-transparent px-[9px]"
                )}
              >
                {tab}
              </button>
            ))}
            <button type="button" aria-label="Collapse ribbon" className="ml-5 flex h-[17px] items-center gap-[5px]">
              <Svg w={14} h={7}>
                <rect width="14" height="7" rx="1.5" fill="#e4e4f0" stroke="none" />
                <path d="M4.5 5H9.5L7 2Z" fill="#222" stroke="none" />
              </Svg>
              <Caret small />
            </button>
          </nav>
        </div>
      </div>
      <div className="h-px bg-[#52b01e]" />
      <Ribbon />
    </header>
  );
}

const tree = [
  { label: "View: Master", icon: "view", level: 1, toggle: "+" },
  { label: "Origin", icon: "folder", level: 1, toggle: "-" },
  { label: "YZ Plane", icon: "plane", level: 2 },
  { label: "XZ Plane", icon: "plane", level: 2 },
  { label: "XY Plane", icon: "plane", level: 2 },
  { label: "X Axis", icon: "axis", level: 2 },
  { label: "Y Axis", icon: "axis", level: 2 },
  { label: "Z Axis", icon: "axis", level: 2 },
  { label: "Center Point", icon: "center", level: 2, last: true },
  { label: "Sketch1", icon: "sketch", level: 1, active: true },
  { label: "End of Part", icon: "end", level: 1, last: true },
];

function Branch({ item }) {
  const outerEnd = item.level === 1 && item.last ? 9 : 18;
  return (
    <Svg w={item.level === 1 ? 24 : 43} h={18}>
      <path d={`M8.5 0V${outerEnd}`} stroke="#808080" />
      {item.level === 1 && <path d="M9 8.5H20" stroke="#808080" />}
      {item.level === 2 && <path d={`M27.5 0V${item.last ? 9 : 18}M28 8.5H39`} stroke="#808080" />}
      {item.toggle && (
        <>
          <rect x="4.5" y="4.5" width="8" height="8" fill="#fff" stroke="#808080" />
          <path d={item.toggle === "+" ? "M6 8.5H11M8.5 6V11" : "M6 8.5H11"} stroke="#000" />
        </>
      )}
    </Svg>
  );
}

function ModelBrowser() {
  return (
    <aside className="flex w-[247px] shrink-0 flex-col border-r border-[#8f8f8f] bg-[#f0f0f0] px-[3px] pb-1 font-['DejaVu_Sans_Condensed','DejaVu_Sans',sans-serif] text-[11px] text-black">
      <div className="flex h-[15px] items-center gap-1 pl-px">
        <div className="h-1 flex-1 border-y border-r border-[#a0a0a0]" />
        <button type="button" aria-label="Close browser" className="px-[3px]">
          <Svg w={7} h={7}>
            <path d="M1 1L6 6M6 1L1 6" stroke="#111" strokeWidth="1.6" />
          </Svg>
        </button>
      </div>
      <div className="flex h-[21px] items-center bg-[#ababab] pr-[2px] pl-2">
        <button
          type="button"
          className="flex items-center gap-1 font-['Open_Sans',sans-serif] text-[13px] font-bold text-white"
        >
          Model
          <Caret />
        </button>
        <button type="button" aria-label="Help" className="ml-auto">
          <Svg w={15} h={16}>
            <path
              d="M1.5 1.5H13.5V12.5H11.500V15L8 12.5H1.5Z"
              fill="#fffbb0"
              stroke="#111"
              strokeWidth="1.2"
            />
            <text x="7.5" y="11" textAnchor="middle" fontSize="10" fontWeight="700" fill="#1a1a80" stroke="none">?</text>
          </Svg>
        </button>
      </div>
      <div className="flex h-7 items-center gap-[7px] pb-1 pl-[3px]">
        <button type="button" aria-label="Filter">
          <Icon name="filter" />
        </button>
        <span className="h-[18px] w-px bg-[#909090]" />
        <button type="button" aria-label="Find" className="pl-px">
          <Icon name="find" />
        </button>
      </div>
      <ul className="mr-px flex-1 border border-[#7a7a7a] bg-white">
        <li className="flex h-[18px] items-center gap-[2px] bg-[#efefef] pl-[5px]">
          <Icon name="part" />
          Part1
        </li>
        {tree.map((item) => (
          <li
            key={item.label}
            className={clsx("flex h-[18px] items-center", item.active ? "bg-white" : "bg-[#efefef]")}
          >
            <Branch item={item} />
            <Icon name={item.icon} className="mr-[2px]" />
            {item.label}
          </li>
        ))}
      </ul>
    </aside>
  );
}

// Arrow head for a dimension line, tip at (x, y); dir is the way it points.
function Arrow({ x, y, dir }) {
  const angle = { left: 0, up: 90, right: 180, down: 270 }[dir];
  return (
    <path
      d="M0 0L12 -2.5V2.5Z"
      transform={`translate(${x} ${y}) rotate(${angle})`}
      fill="none"
      stroke="#fff"
    />
  );
}

function DimText({ x, y, children }) {
  return (
    <text
      x={x}
      y={y}
      textAnchor="middle"
      fontFamily="DejaVu Sans Condensed, DejaVu Sans, sans-serif"
      fontSize="10"
      fontWeight="700"
      fill="#e2e2e2"
      stroke="none"
    >
      {children}
    </text>
  );
}

function SketchDrawing() {
  return (
    <svg className="absolute inset-0 h-full w-full" fill="none" role="img" aria-label="Part sketch">
      <path d="M572.5 0V217" stroke="#3a3a3a" />
      <path d="M572.5 436V2000" stroke="#333" />
      <path d="M0 325.5H3000" stroke="#333" />

      <path d="M336 207H375V286H770V207H810V326H336Z" stroke="#2f0085" strokeWidth="2" />
      <path d="M572.5 218V436" stroke="#ff0" strokeDasharray="3 3" />
      <path d="M570 324.5H574" stroke="#ff0" />

      <g stroke="#fff">
        <path d="M335.5 147V206M374.5 147V285M769.5 183V285" />
        <path d="M336 151.5H349M359 151.5H374" />
        <path d="M375 187.5H559M574 187.5H769" />
        <path d="M269 206.5H333M269 325.5H333M277.5 207V253M277.5 265V325" />
        <path d="M409.5 265V285M409.5 287V325" />
      </g>
      <Arrow x={336} y={151} dir="left" />
      <Arrow x={374} y={151} dir="right" />
      <Arrow x={375} y={187} dir="left" />
      <Arrow x={769} y={187} dir="right" />
      <Arrow x={278} y={207} dir="up" />
      <Arrow x={278} y={325} dir="down" />
      <Arrow x={410} y={287} dir="up" />
      <Arrow x={410} y={325} dir="down" />

      <DimText x={354} y={155}>5</DimText>
      <DimText x={566} y={191}>50</DimText>
      <DimText x={278} y={263}>15</DimText>
      <DimText x={410} y={264}>5</DimText>
    </svg>
  );
}

function AxisTriad() {
  return (
    <Svg w={50} h={56} className="absolute bottom-[42px] left-[45px]">
      <path d="M7.5 22V43" stroke="#10b010" strokeWidth="1.2" />
      <path d="M7.5 13L13 23H2Z" fill="#15a015" stroke="none" />
      <path d="M12 43.5H28" stroke="#c01010" strokeWidth="1.2" />
      <path d="M37 43.5L27 38V49Z" fill="#b00808" stroke="none" />
      <circle cx="7.5" cy="43.5" r="5.5" fill="#0909c8" stroke="none" />
      <g fontSize="10" fontWeight="700" stroke="none" fontFamily="DejaVu Sans Condensed, DejaVu Sans, sans-serif">
        <text x="4" y="12" fill="#22d822">Y</text>
        <text x="39" y="47" fill="#e03030">X</text>
      </g>
    </Svg>
  );
}

function Viewport() {
  return (
    <main className="relative min-w-0 flex-1 overflow-hidden border-l border-[#555] bg-gradient-to-b from-[#303030] to-[#a4a4a4]">
      <SketchDrawing />
      <AxisTriad />
      <div className="absolute top-[5px] right-[2px] flex items-center gap-[9px]">
        <button type="button" aria-label="Minimize document">
          <Svg w={11} h={12}>
            <path d="M0 8H11" stroke="#f4f4f4" strokeWidth="3" />
          </Svg>
        </button>
        <button type="button" aria-label="Restore document">
          <Svg w={11} h={12}>
            <path d="M3 2.5V1.5H10V9H9" stroke="#f4f4f4" />
            <rect x="1.5" y="4" width="6" height="6" stroke="#f4f4f4" strokeWidth="1.8" />
          </Svg>
        </button>
        <button type="button" aria-label="Close document">
          <Svg w={11} h={12}>
            <path d="M1 2L10 10.5M10 2L1 10.5" stroke="#f4f4f4" strokeWidth="2" />
          </Svg>
        </button>
      </div>
      <button
        type="button"
        className="absolute top-[54px] right-[30px] flex h-[46px] w-[46px] items-center justify-center bg-[#8a8b8d] text-[11px] font-semibold text-[#5e6368] shadow-[0_4px_6px_rgba(0,0,0,0.35)]"
      >
        <span className="absolute inset-[9px] bg-[#828488]" />
        <span className="relative">FRONT</span>
      </button>
    </main>
  );
}

function StatusBar() {
  return (
    <footer className="flex h-[26px] shrink-0 flex-col">
      <div className="flex flex-1 items-center bg-gradient-to-b from-[#f8f8f8] to-[#b8b8b8] pt-[3px] text-xs text-[#111]">
        <span className="w-[449px] pl-px">Select geometry to dimension</span>
        <div className="flex items-center gap-2 border-l border-[#d4d4d4] pl-[6px] text-[#333]">
          <Icon name="snapGrid" />
          <Icon name="constraintBulb" />
          <Icon name="tolerance" />
          <Caret small className="-ml-1" />
          <Icon name="slice" />
          <Icon name="dofBulb" />
        </div>
        <span className="ml-auto w-[146px] border-l border-[#d4d4d4] pl-1">-32.923 mm, -19.298 mm</span>
        <span className="w-[100px] border-l border-[#d4d4d4] pl-1">Fully Constrained</span>
        <span className="w-[38px] border-l border-[#d4d4d4] pl-[6px]">1</span>
        <span className="w-[39px] border-l border-[#d4d4d4] pl-[6px]">1</span>
      </div>
      <div className="h-[2px] border-t border-[#46586c] bg-[#c3d3e6]" />
    </footer>
  );
}

export default function App() {
  return (
    <div className="flex h-screen flex-col overflow-hidden bg-[#f0f0f0] font-['Roboto',sans-serif]">
      <Header />
      <div className="flex min-h-0 flex-1 pr-[2px]">
        <ModelBrowser />
        <Viewport />
      </div>
      <StatusBar />
    </div>
  );
}
